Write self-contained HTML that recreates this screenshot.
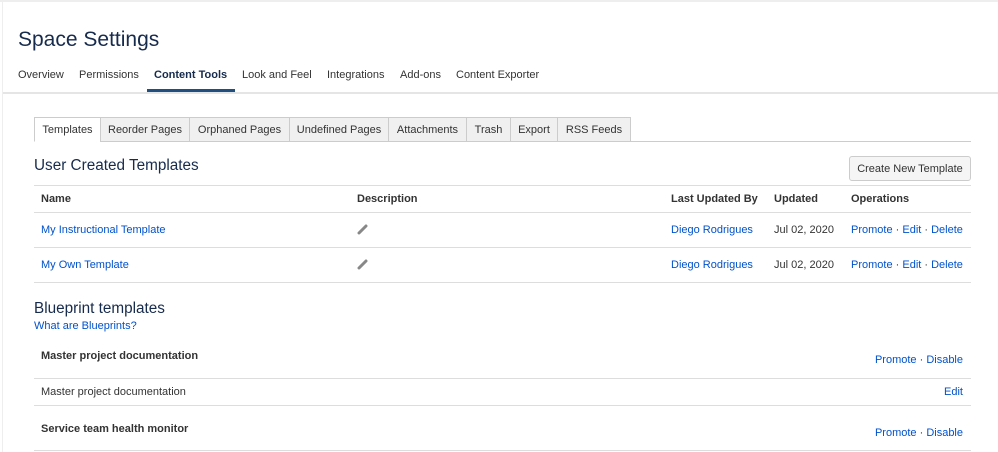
<!DOCTYPE html>
<html><head><meta charset="utf-8"><style>
*{margin:0;padding:0;box-sizing:border-box}
body{width:998px;height:452px;overflow:hidden;background:#fff;font-family:"Liberation Sans",Arial,sans-serif;color:#333;font-size:11px;position:relative}
.a{position:absolute;white-space:nowrap}
.l{color:#0052cc}
.b{font-weight:bold}
.hr{position:absolute;height:1px;background:#ddd}
.tab{position:absolute;top:117px;height:25px;border:1px solid #ccc;background:#f0f0f0;line-height:24px;text-align:center;font-size:11px;color:#333}
</style></head><body>
<div class="a" style="left:0;top:0;width:998px;height:2px;background:#eee"></div>
<div class="a" style="left:2px;top:0;width:1px;height:452px;background:#eee"></div>
<div class="a" style="left:18px;top:28px;font-size:21px;color:#172b4d">Space Settings</div>
<div class="a" style="left:18px;top:69px">Overview</div>
<div class="a" style="left:79px;top:69px">Permissions</div>
<div class="a b" style="left:154px;top:69px;color:#172b4d">Content Tools</div>
<div class="a" style="left:242px;top:69px">Look and Feel</div>
<div class="a" style="left:327px;top:69px">Integrations</div>
<div class="a" style="left:400px;top:69px">Add-ons</div>
<div class="a" style="left:456px;top:69px">Content Exporter</div>
<div class="a" style="left:147px;top:89px;width:88px;height:3px;background:#205081"></div>
<div class="hr" style="left:3px;top:92px;width:995px;background:#e5e5e5;height:2px"></div>

<div class="hr" style="left:34px;top:141px;width:937px;background:#ccc"></div>
<div class="tab" style="left:34px;width:67px;background:#fff;border-bottom-color:#fff">Templates</div>
<div class="tab" style="left:100px;width:90px">Reorder Pages</div>
<div class="tab" style="left:189px;width:101px">Orphaned Pages</div>
<div class="tab" style="left:289px;width:100px">Undefined Pages</div>
<div class="tab" style="left:388px;width:79px">Attachments</div>
<div class="tab" style="left:466px;width:45px">Trash</div>
<div class="tab" style="left:510px;width:48px">Export</div>
<div class="tab" style="left:557px;width:74px">RSS Feeds</div>

<div class="a" style="left:34px;top:157px;font-size:15.3px;color:#172b4d">User Created Templates</div>
<div class="a" style="left:849px;top:156px;width:122px;height:25px;border:1px solid #ccc;border-radius:3px;background:#f5f5f5;line-height:24px;text-align:center;color:#333">Create New Template</div>
<div class="hr" style="left:34px;top:185px;width:937px"></div>
<div class="a b" style="left:41px;top:193px">Name</div>
<div class="a b" style="left:357px;top:193px">Description</div>
<div class="a b" style="left:671px;top:193px">Last Updated By</div>
<div class="a b" style="left:774px;top:193px">Updated</div>
<div class="a b" style="left:851px;top:193px">Operations</div>
<div class="hr" style="left:34px;top:212px;width:937px"></div>
<div class="a l" style="left:41px;top:224px">My Instructional Template</div>
<svg class="a" style="left:357px;top:223px" width="12" height="12"><path d="M2 10 L9 3" stroke="#888" stroke-width="3" stroke-linecap="round"/></svg>
<div class="a l" style="left:671px;top:224px">Diego Rodrigues</div>
<div class="a" style="left:774px;top:224px">Jul 02, 2020</div>
<div class="a" style="left:851px;top:224px"><span class="l">Promote</span> · <span class="l">Edit</span> · <span class="l">Delete</span></div>
<div class="hr" style="left:34px;top:247px;width:937px"></div>
<div class="a l" style="left:41px;top:259px">My Own Template</div>
<svg class="a" style="left:357px;top:258px" width="12" height="12"><path d="M2 10 L9 3" stroke="#888" stroke-width="3" stroke-linecap="round"/></svg>
<div class="a l" style="left:671px;top:259px">Diego Rodrigues</div>
<div class="a" style="left:774px;top:259px">Jul 02, 2020</div>
<div class="a" style="left:851px;top:259px"><span class="l">Promote</span> · <span class="l">Edit</span> · <span class="l">Delete</span></div>
<div class="hr" style="left:34px;top:282px;width:937px"></div>

<div class="a" style="left:34px;top:300px;font-size:15.3px;color:#172b4d">Blueprint templates</div>
<div class="a l" style="left:34px;top:320px">What are Blueprints?</div>
<div class="a b" style="left:41px;top:350px">Master project documentation</div>
<div class="a" style="right:35px;top:354px"><span class="l">Promote</span> · <span class="l">Disable</span></div>
<div class="hr" style="left:34px;top:378px;width:937px"></div>
<div class="a" style="left:41px;top:386px">Master project documentation</div>
<div class="a l" style="right:35px;top:386px">Edit</div>
<div class="hr" style="left:34px;top:405px;width:937px"></div>
<div class="a b" style="left:41px;top:423px">Service team health monitor</div>
<div class="a" style="right:35px;top:427px"><span class="l">Promote</span> · <span class="l">Disable</span></div>
<div class="hr" style="left:34px;top:450px;width:937px"></div>
</body></html>
